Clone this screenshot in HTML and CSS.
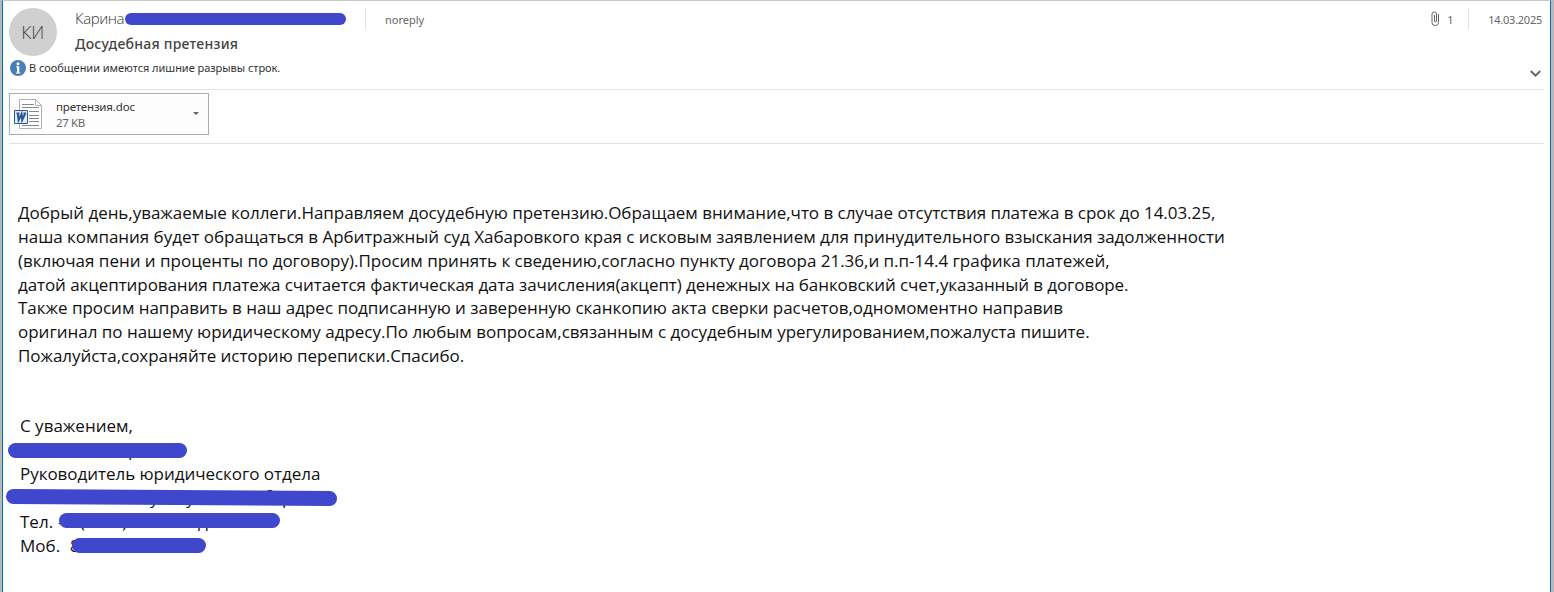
FILE: index.html
```html
<!DOCTYPE html>
<html lang="ru">
<head>
  <meta charset="UTF-8">
  <meta name="viewport" content="width=device-width, initial-scale=1.0">
  <title>Досудебная претензия</title>
  <link rel="stylesheet" href="styles.css">
</head>
<body>
  <div class="window">
    <header class="header">
      <div class="top">
        <div class="avatar">КИ</div>
        <div class="info">
          <div class="from-row">
            <span class="sender">Карина</span>
            <span class="bar bar-sender"></span>
            <span class="recipient">noreply</span>
          </div>
          <h1 class="subject">Досудебная претензия</h1>
        </div>
        <div class="meta">
          <svg class="clip" width="9" height="16" viewBox="0 0 9 16" fill="none" stroke="#666" stroke-width="1">
            <path d="M3.500 4v6a1 1 0 0 0 2 0V3a2 2 0 0 0-2-2h-.5a2 2 0 0 0-2 2v8.500a3 3 0 0 0 3 3h.5a3 3 0 0 0 3-3V3"/>
          </svg>
          <span class="count">1</span>
          <span class="date">14.03.2025</span>
        </div>
      </div>
      <div class="notice">
        <svg width="16" height="16" viewBox="0 0 16 16">
          <circle cx="8" cy="8" r="8" fill="#4a7ebb"/>
          <circle cx="8" cy="3.700" r="1.500" fill="#fff"/>
          <path d="M6 6.200h3.300v6.300h1v1H6v-1h1V7.200H6z" fill="#fff"/>
        </svg>
        <span class="notice-text">В сообщении имеются лишние разрывы строк.</span>
        <svg class="chevron" width="11" height="8" viewBox="0 0 11 8" fill="none" stroke="#666" stroke-width="2">
          <path d="M.8 1l4.700 4.700L10.200 1"/>
        </svg>
      </div>
    </header>

    <section class="attachments">
      <div class="file">
        <svg class="doc" width="29" height="30" viewBox="0 0 29 30">
          <path d="M5.500.5h16l6 6v23h-22z" fill="#fff" stroke="#b0b0b0"/>
          <path d="M21.500.5v6h6" fill="none" stroke="#b0b0b0"/>
          <path d="M8 5.500h12M8 8.500h17M15 12.500h10M15 16.500h10M15 19.500h10M15 22.500h10M8 26.500h17" stroke="#888"/>
          <path d="M.5 11.500h13v13H.5z" fill="#e4ecf7" stroke="#2b579a"/>
          <path d="M3.800 14.500l.8 6.500 3-6 .6 6 3-6.500M2.500 14.500h3M9.500 14.500h2.500" fill="none" stroke="#2b579a" stroke-width="2"/>
        </svg>
        <div class="file-info">
          <div class="file-name">претензия.doc</div>
          <div class="file-size">27 KB</div>
        </div>
        <span class="arrow"></span>
      </div>
    </section>

    <main class="body">
      <div class="letter">
        <p class="l1">Добрый день,уважаемые коллеги.Направляем досудебную претензию.Обращаем внимание,что в случае отсутствия платежа в срок до 14.03.25,</p>
        <p class="l2">наша компания будет обращаться в Арбитражный суд Хабаровкого края с исковым заявлением для принудительного взыскания задолженности</p>
        <p class="l3">(включая пени и проценты по договору).Просим принять к сведению,согласно пункту договора 21.36,и п.п-14.4 графика платежей,</p>
        <p class="l4">датой акцептирования платежа считается фактическая дата зачисления(акцепт) денежных на банковский счет,указанный в договоре.</p>
        <p class="l5">Также просим направить в наш адрес подписанную и заверенную сканкопию акта сверки расчетов,одномоментно направив</p>
        <p class="l6">оригинал по нашему юридическому адресу.По любым вопросам,связанным с досудебным урегулированием,пожалуста пишите.</p>
        <p class="l7">Пожалуйста,сохраняйте историю переписки.Спасибо.</p>
      </div>
      <div class="signature">
        <p>С уважением,</p>
        <p class="hidden-name"><span>р</span><i class="bar bar-name"></i></p>
        <p class="position">Руководитель юридического отдела</p>
        <p class="hidden-org"><span>у</span><span>у</span><span>б</span><span>р</span><i class="bar bar-org"></i></p>
        <p class="hidden-tel">Тел.<span>-</span><span>(</span><span>)</span><span>д</span><i class="bar bar-tel"></i></p>
        <p class="hidden-mob">Моб.<span>8</span><i class="bar bar-mob"></i></p>
      </div>
    </main>
  </div>
</body>
</html>
```

FILE: styles.css
```css
* {
  box-sizing: border-box;
  margin: 0;
  padding: 0;
}
body {
  height: 592px;
  padding: 0 3px 0 2px;
  background: #bab7bb;
  font-family: 'Noto Sans', 'Open Sans', sans-serif;
  color: #444;
  overflow: hidden;
}
.window {
  height: 592px;
  background: #fff;
  border-top: 1px solid #c8c8c8;
  border-left: 1px solid #0072c6;
  border-right: 1px solid #0072c6;
  padding: 0 6px;
}
.bar {
  display: block;
  background: #3f48cc;
  border-radius: 8px;
}

/* header */
.header {
  height: 89px;
  border-bottom: 1px solid #e1e1e1;
}
.top {
  display: flex;
  height: 58px;
  padding-top: 7px;
}
.avatar {
  width: 48px;
  height: 48px;
  margin-right: 18px;
  padding-right: 1px;
  border-radius: 50%;
  background: #d0d0d0;
  color: #444;
  font-family: 'Open Sans', sans-serif;
  font-weight: 300;
  font-size: 18px;
  letter-spacing: -.5px;
  line-height: 48px;
  text-align: center;
}
.info {
  flex: 1;
}
.from-row {
  display: flex;
  align-items: center;
  height: 21px;
}
.sender {
  width: 50px;
  font-family: 'Open Sans', sans-serif;
  font-weight: 300;
  font-size: 15px;
  line-height: 21px;
  letter-spacing: -.4px;
  color: #333;
}
.bar-sender {
  width: 221px;
  height: 12px;
  border-radius: 6px;
}
.recipient {
  margin-left: 19px;
  padding-left: 19px;
  border-left: 1px solid #e1e1e1;
  font-size: 11px;
  line-height: 21px;
  padding-top: 1px;
  height: 21px;
  color: #666;
}
.subject {
  margin-top: 4px;
  font-size: 14px;
  font-weight: 500;
  line-height: 22px;
  letter-spacing: .25px;
  color: #444;
}
.meta {
  display: flex;
  height: 21px;
  font-size: 11px;
  line-height: 24px;
  letter-spacing: -.25px;
  color: #666;
}
.clip {
  margin-top: 3px;
}
.count {
  margin-left: 7px;
  width: 22px;
  border-right: 1px solid #e1e1e1;
}
.date {
  margin-left: 19px;
  margin-right: 2px;
}
.notice {
  display: flex;
  align-items: center;
  height: 18px;
  padding-left: 1px;
}
.notice-text {
  flex: 1;
  margin-left: 3px;
  padding-bottom: 2px;
  font-size: 11px;
  letter-spacing: -.03px;
  color: #333;
}
.chevron {
  margin: 12px 3px 0 0;
}

/* attachment */
.attachments {
  height: 54px;
  padding-top: 3px;
  border-bottom: 1px solid #e1e1e1;
}
.file {
  display: flex;
  align-items: center;
  width: 200px;
  height: 42px;
  padding: 0 9px 0 4px;
  border: 1px solid #ababab;
  background: #fdfdfd;
}
.file-info {
  flex: 1;
  margin: 2px 0 0 13px;
  font-size: 11.500px;
  line-height: 16px;
  letter-spacing: -.15px;
}
.file-name {
  color: #333;
}
.file-size {
  color: #666;
  letter-spacing: -.4px;
}
.arrow {
  margin-bottom: 1px;
  border: 3px solid transparent;
  border-top-color: #666;
  border-bottom: 0;
}

/* message */
.body {
  padding: 57px 0 0 9px;
  color: #111;
  font-family: 'Open Sans', sans-serif;
  font-size: 17px;
}
.letter {
  line-height: 23.850px;
}
.letter p {
  width: max-content;
}
.l1 {
  letter-spacing: -.036px;
}
.l2 {
  letter-spacing: -.032px;
}
.l3 {
  letter-spacing: -.014px;
}
.l4 {
  letter-spacing: -.086px;
}
.l5 {
  letter-spacing: -.026px;
}
.l6 {
  letter-spacing: -.014px;
}
.l7 {
  letter-spacing: -.05px;
}
.signature {
  margin: 46px 0 0 2px;
  line-height: 24px;
}
.signature p {
  position: relative;
  height: 24px;
}
.signature .position {
  letter-spacing: -.04px;
}
.signature span,
.signature .bar {
  position: absolute;
}
.bar-name {
  left: -12px;
  top: 5px;
  width: 179px;
  height: 15px;
}
.hidden-name span {
  left: 108px;
}
.bar-org {
  left: -14px;
  top: 4px;
  width: 331px;
  height: 15px;
  transform: rotate(.4deg);
}
.hidden-org span:nth-child(1) {
  left: 130px;
}
.hidden-org span:nth-child(2) {
  left: 166px;
}
.hidden-org span:nth-child(3) {
  left: 243px;
  top: -2px;
}
.hidden-org span:nth-child(4) {
  left: 262px;
}
.bar-tel {
  left: 39px;
  top: 3px;
  width: 221px;
  height: 15px;
}
.hidden-tel span:nth-child(1) {
  left: 38px;
}
.hidden-tel span:nth-child(2) {
  left: 60px;
}
.hidden-tel span:nth-child(3) {
  left: 102px;
}
.hidden-tel span:nth-child(4) {
  left: 178px;
}
.bar-mob {
  left: 52px;
  top: 4px;
  width: 134px;
  height: 15px;
}
.hidden-mob span {
  left: 50px;
}
```
